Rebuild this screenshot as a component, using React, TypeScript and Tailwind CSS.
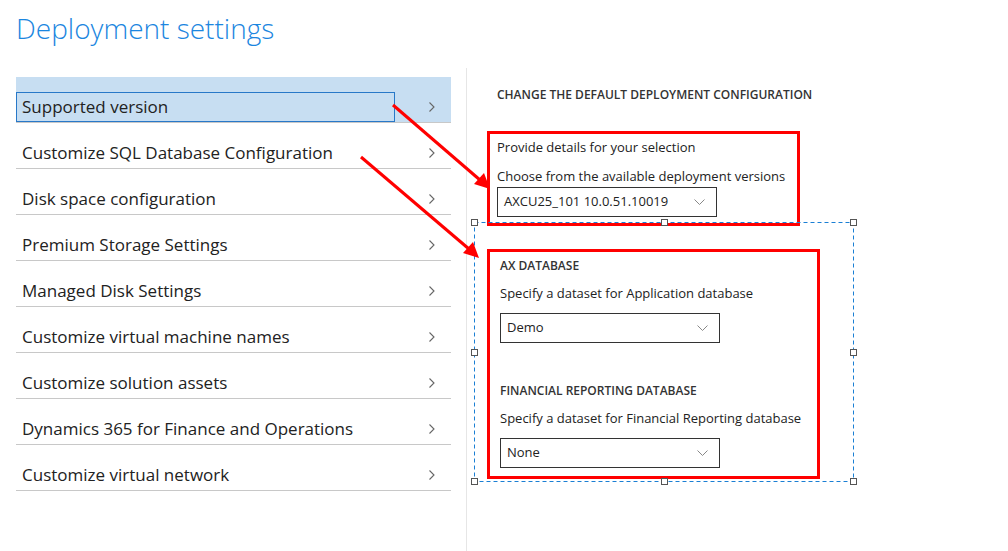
import React from 'react';

const ITEMS = [
  'Supported version',
  'Customize SQL Database Configuration',
  'Disk space configuration',
  'Premium Storage Settings',
  'Managed Disk Settings',
  'Customize virtual machine names',
  'Customize solution assets',
  'Dynamics 365 for Finance and Operations',
  'Customize virtual network',
];

function Chevron() {
  return (
    <svg width="8" height="12" viewBox="0 0 8 12" className="shrink-0">
      <polyline points="1.5,1.5 6,6 1.5,10.5" fill="none" stroke="#666" strokeWidth="1.1" />
    </svg>
  );
}

function Select({ value }: { value: string }) {
  return (
    <div className="flex h-[30px] w-[220px] items-center justify-between border border-[#333] bg-white pl-[6px] pr-[11px] text-[13px] text-[#222]">
      <span>{value}</span>
      <svg width="11" height="6" viewBox="0 0 11 6">
        <polyline points="0.5,0.5 5.5,5.5 10.5,0.5" fill="none" stroke="#888" strokeWidth="1" />
      </svg>
    </div>
  );
}

function Handle({ x, y }: { x: number; y: number }) {
  return <rect x={x - 3} y={y - 3} width="6" height="6" fill="#fff" stroke="#555" strokeWidth="1" />;
}

export default function App() {
  return (
    <div
      className="relative h-[551px] w-[1008px] overflow-hidden bg-white"
      style={{ fontFamily: '"Segoe UI", "Open Sans", "Noto Sans", sans-serif' }}
    >
      <h1 className="pl-[16px] pt-[8px] text-[28px] font-light leading-[40px] text-[#1b86e0]">
        Deployment settings
      </h1>

      <div className="mt-[20px] flex">
        <ul className="ml-[16px] mt-[9px] w-[435px]">
          {ITEMS.map((item, i) => (
            <li
              key={item}
              className={`flex h-[46px] items-end border-b border-[#c8c8c8] ${i === 0 ? 'bg-[#c7def2]' : ''}`}
            >
              <div className="flex h-[30px] w-full items-center">
                <div
                  className={`flex h-[30px] w-[379px] items-center pl-[5px] text-[17px] text-[#222] ${
                    i === 0 ? 'border border-[#2878c8]' : 'border border-transparent'
                  }`}
                >
                  {item}
                </div>
                <div className="ml-[33px] flex h-[30px] items-center">
                  <Chevron />
                </div>
              </div>
            </li>
          ))}
        </ul>

        <div className="ml-[15px] min-h-[483px] border-l border-[#e6e6e6] pl-[20px] pt-[19px]">
          <p className="pl-[10px] text-[12px] font-semibold leading-[16px] text-[#333]">
            CHANGE THE DEFAULT DEPLOYMENT CONFIGURATION
          </p>

          <div className="mt-[28px] flex h-[95px] w-[313px] flex-col border-[3px] border-[#f00] pl-[7px] pt-[3px] text-[13px] text-[#222]">
            <p className="leading-[20px]">Provide details for your selection</p>
            <p className="mt-[9px] leading-[20px]">Choose from the available deployment versions</p>
            <div className="mt-[1px]">
              <Select value="AXCU25_101 10.0.51.10019" />
            </div>
          </div>

          <div className="mt-[23px] flex h-[230px] w-[333px] flex-col border-[3px] border-[#f00] pl-[10px] pt-[6px] text-[13px] text-[#222]">
            <p className="text-[12px] font-semibold leading-[16px] text-[#333]">AX DATABASE</p>
            <p className="mt-[9px] leading-[20px]">Specify a dataset for Application database</p>
            <div className="mt-[10px]">
              <Select value="Demo" />
            </div>
            <p className="mt-[40px] text-[12px] font-semibold leading-[16px] text-[#333]">
              FINANCIAL REPORTING DATABASE
            </p>
            <p className="mt-[9px] leading-[20px]">Specify a dataset for Financial Reporting database</p>
            <div className="mt-[10px]">
              <Select value="None" />
            </div>
          </div>
        </div>
      </div>

      <svg className="pointer-events-none absolute left-0 top-0" width="1008" height="551">
        <rect x="474.5" y="222.5" width="379" height="259" fill="none" stroke="#1a7fd4" strokeWidth="1" strokeDasharray="4 3" />
        <Handle x={474.5} y={222.5} />
        <Handle x={664.5} y={222.5} />
        <Handle x={853.5} y={222.5} />
        <Handle x={474.5} y={352.5} />
        <Handle x={853.5} y={352.5} />
        <Handle x={474.5} y={481.5} />
        <Handle x={664.5} y={481.5} />
        <Handle x={853.5} y={481.5} />

        <line x1="393" y1="105" x2="480" y2="180" stroke="#f00" strokeWidth="3" />
        <polygon points="490,189 474,184 484,173" fill="#f00" />
        <line x1="361" y1="157" x2="469" y2="249" stroke="#f00" strokeWidth="3" />
        <polygon points="479,258 463,253 473,242" fill="#f00" />
      </svg>
    </div>
  );
}
